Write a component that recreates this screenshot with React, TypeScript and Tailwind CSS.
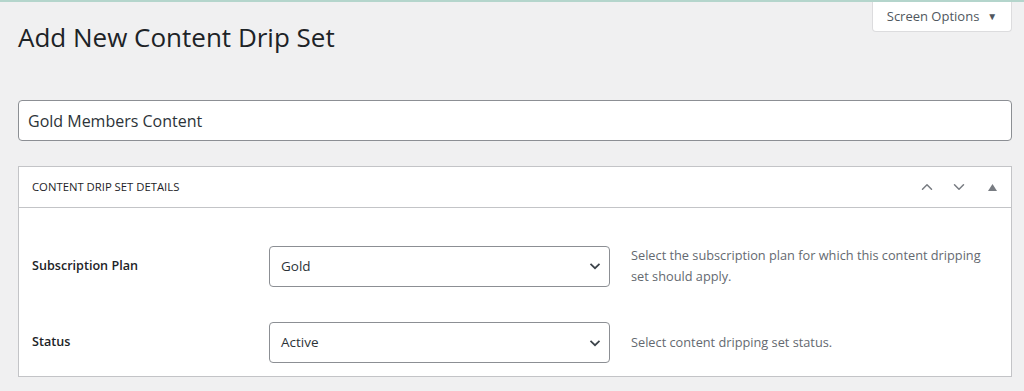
import { ChevronDown, ChevronUp } from "lucide-react";

function SelectBox({ value }: { value: string }) {
  return (
    <div className="flex h-[41px] w-[341px] items-center justify-between rounded-[4px] border border-[#8c8f94] bg-white pl-[11px] pr-[8px] text-[13.5px] text-[#2c3338]">
      <span>{value}</span>
      <svg width="12" height="8" viewBox="0 0 12 8" fill="none">
        <path d="M1.5 1.8 6 6.2 10.5 1.8" stroke="#3c434a" strokeWidth="1.7" />
      </svg>
    </div>
  );
}

function Row({ label, value, desc }: { label: string; value: string; desc: string }) {
  return (
    <div className="grid grid-cols-[237px_341px_1fr] items-center">
      <div className="text-[12.6px] font-semibold text-[#1d2327]">{label}</div>
      <SelectBox value={value} />
      <p className="pl-[21px] pr-[20px] text-[12.75px] leading-[21px] text-[#646970]">{desc}</p>
    </div>
  );
}

export default function App() {
  return (
    <div className="h-[391px] w-[1024px] overflow-hidden border-t-2 border-[#b4d5cc] bg-[#f0f0f1] font-['Open_Sans',sans-serif]">
      <div className="flex items-start justify-between pl-[18px] pr-[12px]">
        <h1 className="mt-[18px] text-[26px] leading-[34px] font-normal text-[#1d2327]">
          Add New Content Drip Set
        </h1>
        <button className="-mt-[2px] flex h-[32px] w-[140px] items-center justify-center gap-[8px] rounded-b-[4px] border border-t-0 border-[#dcdcde] bg-white pt-[2px] text-[13px] text-[#50575e]">
          <span>Screen Options</span>
          <span className="text-[10px] text-[#50575e]">▼</span>
        </button>
      </div>

      <div className="px-[18px] pr-[12px]">
        <div className="mt-[46px] flex h-[41px] items-center rounded-[4px] border border-[#8c8f94] bg-white pl-[9px] text-[16px] text-[#2c3338]">
          Gold Members Content
        </div>

        <div className="mt-[25px] border border-[#c3c4c7] bg-white">
          <div className="flex h-[41px] items-center justify-between border-b border-[#c3c4c7] pl-[13px] pr-[14px]">
            <h2 className="text-[11.3px] font-normal uppercase text-[#1d2327]">Content Drip Set Details</h2>
            <div className="flex items-center text-[#787c82]">
              <ChevronUp className="h-[18px] w-[18px]" strokeWidth={2} />
              <ChevronDown className="ml-[14px] h-[18px] w-[18px]" strokeWidth={2} />
              <svg className="ml-[20px]" width="9" height="7" viewBox="0 0 9 7">
                <path d="M0 7 4.5 0 9 7z" fill="#787c82" />
              </svg>
            </div>
          </div>
          <div className="flex flex-col gap-[35px] pl-[13px] pt-[37px] pb-[13px]">
            <Row
              label="Subscription Plan"
              value="Gold"
              desc="Select the subscription plan for which this content dripping set should apply."
            />
            <Row label="Status" value="Active" desc="Select content dripping set status." />
          </div>
        </div>
      </div>
    </div>
  );
}
